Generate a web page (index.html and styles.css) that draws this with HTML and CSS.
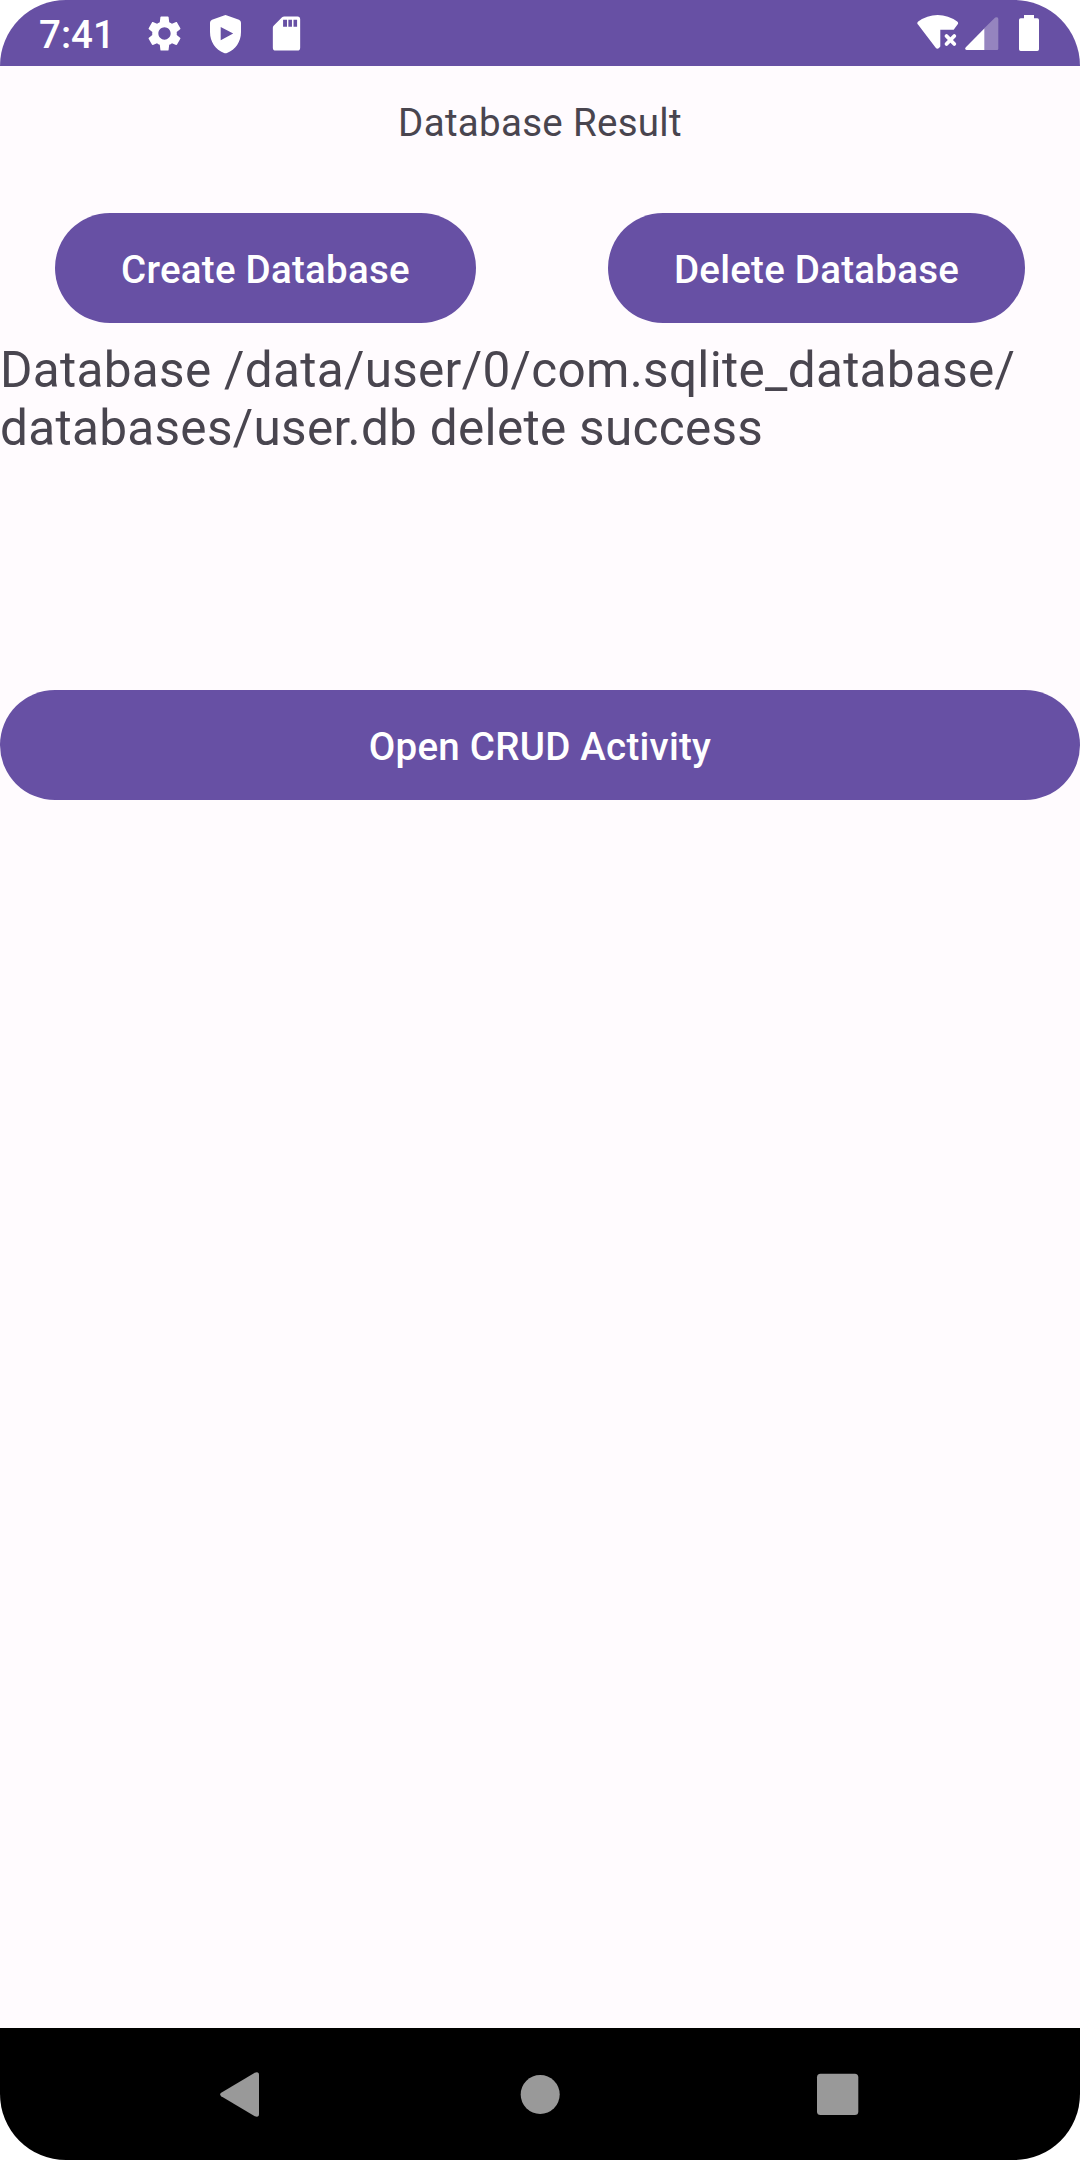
FILE: index.html
```html
<!DOCTYPE html>
<html lang="en">
<head>
<meta charset="utf-8">
<title>Database Result</title>
<link rel="stylesheet" href="styles.css">
</head>
<body>
<div class="screen">
  <header class="status-bar">
    <span class="clock">7:41</span>
    <div class="notifications">
      <svg class="icon" viewBox="0 0 24 24"><path d="M19.14 12.94c.04-.3.06-.61.06-.94 0-.32-.02-.64-.07-.94l2.03-1.58c.18-.14.23-.41.12-.61l-1.92-3.32c-.12-.22-.37-.29-.59-.22l-2.39.96c-.5-.38-1.03-.7-1.62-.94L14.4 2.410c-.04-.24-.24-.41-.48-.41h-3.84c-.24 0-.43.17-.47.41L9.25 5.35c-.59.24-1.13.57-1.62.94l-2.39-.96c-.22-.08-.47 0-.59.22L2.74 8.87c-.12.21-.08.47.12.61l2.03 1.58c-.05.3-.09.63-.09.94s.02.64.07.94l-2.03 1.58c-.18.14-.23.41-.12.61l1.92 3.32c.12.22.37.29.59.22l2.39-.96c.5.38 1.03.7 1.62.94l.36 2.940c.05.24.24.41.48.41h3.84c.24 0 .44-.17.47-.41l.36-2.940c.59-.24 1.13-.56 1.62-.94l2.39.96c.22.08.47 0 .59-.22l1.92-3.32c.12-.22.07-.47-.12-.61l-2.01-1.58zM12 15.6c-1.98 0-3.6-1.62-3.6-3.6s1.62-3.6 3.6-3.6 3.6 1.62 3.6 3.6-1.62 3.6-3.6 3.6z"/></svg>
      <svg class="icon" viewBox="0 0 41 41"><path fill-rule="evenodd" d="M19 2.400q1.500-.7 3 0L34 6.800q2 .8 2 3V19c0 10-5.500 17.500-14 21q-1.500.6-3 0C10.500 36.500 5 29 5 19V9.800q0-2.200 2-3zM15.700 14v13.300L28.200 20.500z"/></svg>
      <svg class="icon" viewBox="0 0 24 24"><path d="M18.500 2H10.700q-.8 0-1.300.5L4.600 7.300Q4 7.900 4 8.700V20.300Q4 22 5.700 22H18.300Q20 22 20 20.300V3.700Q20 2 18.500 2zM12.300 8H10V4h2.300zm2.900 0h-2.100V4h2.100zm3 0h-2.100V4h2.100z"/></svg>
    </div>
    <div class="system">
      <svg class="wifi" viewBox="0 0 42 36"><path d="M1 9.600Q-.5 8 1.200 6.600Q10 0 20.700 0T40.200 6.600Q41.900 8 40.500 9.600L36.700 14.700H23.300V31.500L22 33Q20.300 34.500 18.700 32.800z"/><path class="cross" d="M29.500 21l7.800 8M37.300 21l-7.800 8"/></svg>
      <svg class="signal" viewBox="0 0 34 34"><path class="faint" d="M19 11.500L30.200.6Q33.300-.8 33.300 2V31.700Q33.300 33 32 33H19z"/><path d="M19.300 11.500V33H1.600Q-.7 32.500.6 30.500z"/></svg>
      <svg class="battery" viewBox="0 0 20 36"><path d="M5 0H15V3.300H18.300Q20 3.300 20 5V34.200Q20 36 18.300 36H1.700Q0 36 0 34.200V5Q0 3.300 1.700 3.300H5z"/></svg>
    </div>
  </header>

  <main class="content">
    <h1 class="title">Database Result</h1>
    <div class="actions">
      <button class="button create">Create Database</button>
      <button class="button delete">Delete Database</button>
    </div>
    <p class="result">Database /data/user/0/com.sqlite_database/<br>databases/user.db delete success</p>
    <button class="button wide">Open CRUD Activity</button>
  </main>

  <nav class="nav-bar">
    <svg class="nav-icon" viewBox="0 -0.5 48 48"><path d="M5.200 22.300L38.800 2.200Q43 .6 43 4.500V43.500Q43 47.400 38.800 45.800L5.200 25.700Q3 24 5.200 22.300z"/></svg>
    <svg class="nav-icon" viewBox="0 -0.5 48 48"><circle cx="24.200" cy="24" r="19.500"/></svg>
    <svg class="nav-icon" viewBox="0 -0.5 48 48"><rect x="1" y="3.200" width="41.300" height="41.300" rx="3.500"/></svg>
  </nav>
</div>
</body>
</html>
```
FILE: styles.css
```css
* {
  box-sizing: border-box;
}

body {
  margin: 0;
  background: #fff;
  font-family: Roboto, "Noto Sans", sans-serif;
}

.screen {
  display: flex;
  flex-direction: column;
  width: 1080px;
  height: 2160px;
  overflow: hidden;
  border-radius: 66px;
  background: #fffbfe;
}

svg {
  display: block;
  flex: none;
  fill: currentColor;
}

.status-bar {
  display: flex;
  align-items: flex-start;
  height: 66px;
  padding: 0 41px 0 39px;
  background: #6750a4;
  color: #fff;
}

.clock {
  width: 105px;
  padding-top: 12px;
  font-size: 38.5px;
  font-weight: 500;
  line-height: 45px;
}

.notifications {
  display: flex;
  gap: 20px;
  padding-top: 12.5px;
}

.icon {
  width: 41px;
  height: 41px;
}

.system {
  display: flex;
  margin-left: auto;
  padding-top: 15px;
}

.wifi {
  width: 42px;
  height: 36px;
}

.cross {
  fill: none;
  stroke: currentColor;
  stroke-width: 3.8;
  stroke-linecap: round;
}

.signal {
  width: 34px;
  height: 34px;
  margin: 2px 20px 0 6px;
}

.faint {
  opacity: 0.3;
}

.battery {
  width: 20px;
  height: 36px;
}

.content {
  flex: 1;
  padding-top: 34px;
  color: #49454f;
}

.title {
  margin: 0;
  font-size: 38.5px;
  font-weight: 400;
  line-height: 46px;
  letter-spacing: 0.3px;
  text-align: center;
}

.actions {
  display: flex;
  justify-content: space-between;
  margin-top: 67px;
  padding: 0 55px;
}

.button {
  height: 110px;
  padding: 4px 0 0;
  border: 0;
  border-radius: 55px;
  background: #6750a4;
  color: #fff;
  font: 500 38.5px/46px Roboto, "Noto Sans", sans-serif;
  letter-spacing: 0.25px;
}

.create {
  width: 421px;
}

.delete {
  width: 417px;
}

.wide {
  display: block;
  width: 100%;
}

.result {
  height: 349px;
  margin: 18px 0 0;
  font-size: 49.5px;
  line-height: 58px;
  letter-spacing: 0.3px;
}

.nav-bar {
  display: flex;
  justify-content: space-between;
  align-items: center;
  height: 132px;
  padding: 0 216px;
  background: #000;
  color: #999;
}

.nav-icon {
  width: 48px;
  height: 48px;
}
```
